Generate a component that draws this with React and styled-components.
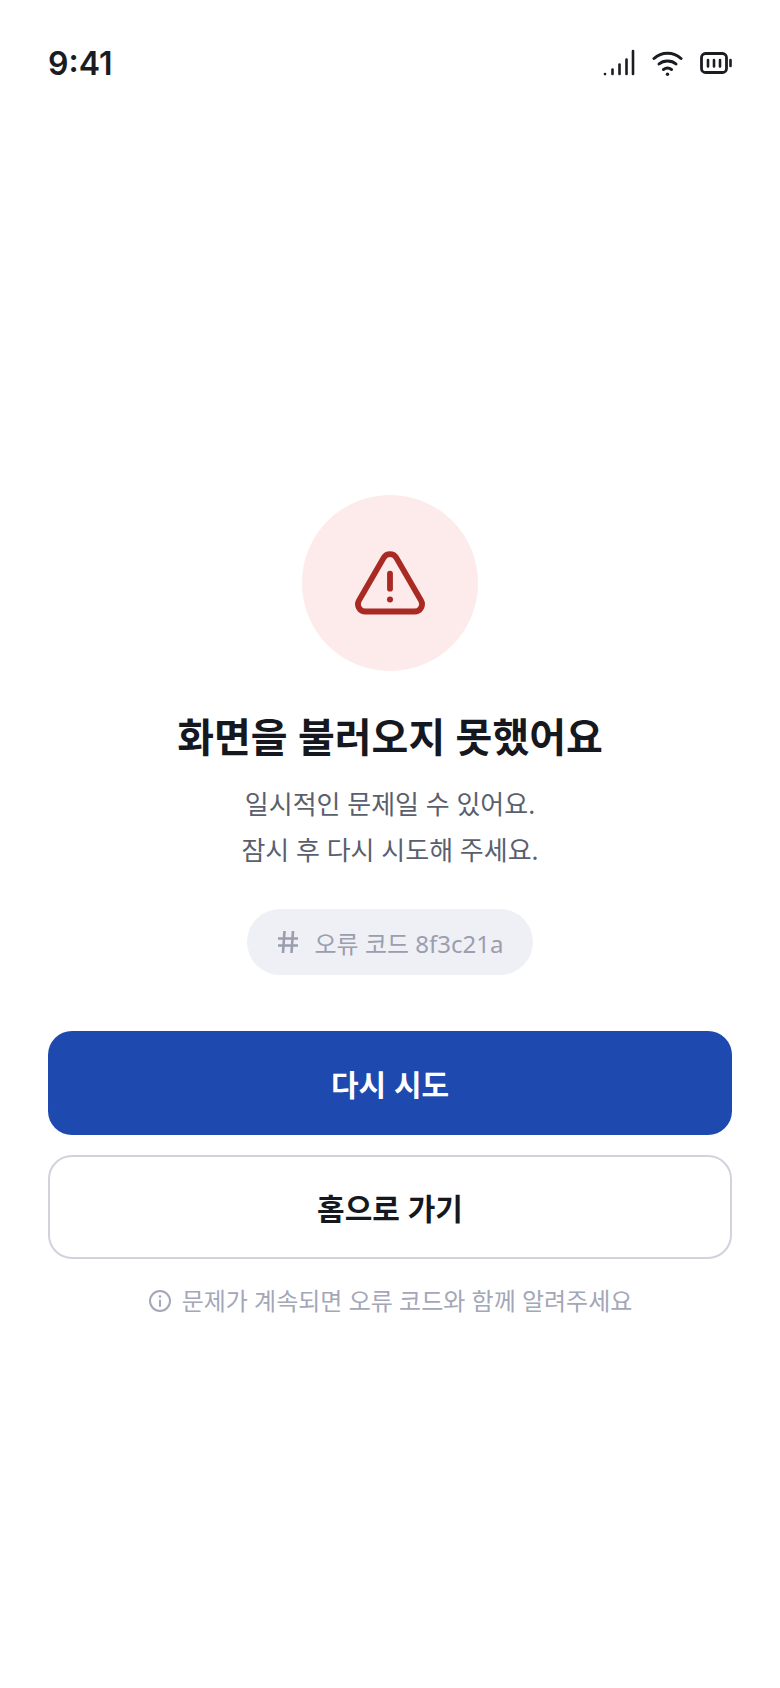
import React from 'react'
import styled, { createGlobalStyle } from 'styled-components'

const GlobalStyle = createGlobalStyle`
  html, body {
    margin: 0;
    padding: 0;
    background: #fff;
  }
  * {
    box-sizing: border-box;
  }
`

function SignalIcon() {
  return (
    <svg width='32' height='28' viewBox='0 0 32 28' fill='none' stroke='#1a1c22' strokeWidth='2.6' strokeLinecap='round'>
      <path d='M2 25v.1' />
      <path d='M9.500 20.500V25' />
      <path d='M16.500 15.500V25' />
      <path d='M23.500 10.500V25' />
      <path d='M30 2v23' />
    </svg>
  )
}

function WifiIcon() {
  return (
    <svg width='31' height='28' viewBox='0 0 31 28' fill='none' stroke='#1a1c22' strokeWidth='3' strokeLinecap='round'>
      <path d='M2 9.500C9.500 2.500 21.500 2.500 29 9.500' />
      <path d='M7 15C11.500 11 19.500 11 24 15' />
      <path d='M11.500 20.500c2.300-1.700 5.700-1.700 8 0' />
      <circle cx='15.500' cy='25.300' r='1.700' fill='#1a1c22' stroke='none' />
    </svg>
  )
}

function BatteryIcon() {
  return (
    <svg width='32' height='22' viewBox='0 0 32 22' fill='none' stroke='#1a1c22' strokeLinecap='round'>
      <rect x='1.500' y='1.500' width='25' height='19' rx='4' strokeWidth='2.800' />
      <path d='M8 8v6.500M14 8v6.500M20 8v6.500' strokeWidth='2.600' />
      <path d='M30.500 8v6' strokeWidth='2.600' />
    </svg>
  )
}

function AlertIcon() {
  return (
    <svg width='72' height='64' viewBox='0 0 76 68' fill='none' stroke='#a82a22' strokeWidth='6.200' strokeLinecap='round' strokeLinejoin='round'>
      <path d='M31.200 7.300 5.100 52.500C2 58 5.900 64.300 12 64.300h52c6.100 0 10-6.300 6.900-11.800L44.800 7.300c-3-5.300-10.600-5.300-13.600 0Z' />
      <path d='M38 24v16' strokeWidth='6.200' />
      <circle cx='38' cy='51.500' r='3.200' fill='#a82a22' stroke='none' />
    </svg>
  )
}

function HashIcon() {
  return (
    <svg width='22' height='24' viewBox='0 0 22 24' fill='none' stroke='#9a9eae' strokeWidth='2.600' strokeLinecap='butt'>
      <path d='M1 8.500h20M1 15.500h20M7.500 1 6 23M16 1 14.500 23' />
    </svg>
  )
}

function InfoIcon() {
  return (
    <svg width='24' height='24' viewBox='0 0 24 24' fill='none' stroke='#a3a7b8' strokeWidth='2' strokeLinecap='round'>
      <circle cx='12' cy='12' r='10' />
      <path d='M12 11.500v5.500' />
      <circle cx='12' cy='7.500' r='1.300' fill='#a3a7b8' stroke='none' />
    </svg>
  )
}

export default function App() {
  return (
    <Screen>
      <GlobalStyle />
      <StatusBar>
        <Time>9:41</Time>
        <StatusIcons>
          <SignalIcon />
          <WifiIcon />
          <BatteryIcon />
        </StatusIcons>
      </StatusBar>
      <Content>
        <IconCircle>
          <AlertIcon />
        </IconCircle>
        <Title>화면을 불러오지 못했어요</Title>
        <Description>
          일시적인 문제일 수 있어요.
          <br />
          잠시 후 다시 시도해 주세요.
        </Description>
        <CodePill>
          <HashIcon />
          <span>오류 코드 8f3c21a</span>
        </CodePill>
        <Actions>
          <Button $primary>다시 시도</Button>
          <Button>홈으로 가기</Button>
        </Actions>
        <Hint>
          <InfoIcon />
          <span>문제가 계속되면 오류 코드와 함께 알려주세요</span>
        </Hint>
      </Content>
    </Screen>
  )
}

const fontStack = `"Noto Sans", "Noto Sans CJK KR", sans-serif`

const Screen = styled.main`
  width: 780px;
  height: 1688px;
  background: #fff;
  font-family: ${fontStack};
  overflow: hidden;
`
const StatusBar = styled.header`
  display: flex;
  justify-content: space-between;
  align-items: center;
  height: 44px;
  margin-top: 41px;
  padding: 0 48px;
`
const Time = styled.span`
  font-family: Inter, sans-serif;
  font-size: 32px;
  font-weight: 600;
  color: #1a1c22;
`
const StatusIcons = styled.div`
  display: flex;
  align-items: center;
  gap: 17px;
`
const Content = styled.section`
  display: flex;
  flex-direction: column;
  align-items: center;
  padding: 410px 48px 0;
`
const IconCircle = styled.div`
  display: flex;
  align-items: center;
  justify-content: center;
  width: 176px;
  height: 176px;
  border-radius: 50%;
  background: #fdeaea;
`
const Title = styled.h1`
  margin: 40px 0 0;
  font-size: 40px;
  line-height: 52px;
  font-weight: 700;
  color: #16181f;
`
const Description = styled.p`
  margin: 18px 0 0;
  font-size: 26px;
  line-height: 46px;
  font-weight: 400;
  text-align: center;
  color: #5a5f6e;
`
const CodePill = styled.div`
  display: flex;
  align-items: center;
  gap: 16px;
  height: 66px;
  margin-top: 36px;
  padding: 0 30px;
  border-radius: 33px;
  background: #eef0f6;
  font-size: 24px;
  color: #9a9eae;
`
const Actions = styled.div`
  display: flex;
  flex-direction: column;
  gap: 20px;
  width: 100%;
  margin-top: 56px;
`
const Button = styled.button`
  width: 100%;
  height: 104px;
  border-radius: 24px;
  border: ${(props) => (props.$primary ? 'none' : '2px solid #d0d2dd')};
  background: ${(props) => (props.$primary ? '#1e49ae' : '#fff')};
  color: ${(props) => (props.$primary ? '#fff' : '#16181f')};
  font-family: inherit;
  font-size: 30px;
  font-weight: 600;
`
const Hint = styled.p`
  display: flex;
  align-items: center;
  gap: 10px;
  margin: 24px 0 0;
  font-size: 24px;
  line-height: 36px;
  color: #a3a7b8;
`
